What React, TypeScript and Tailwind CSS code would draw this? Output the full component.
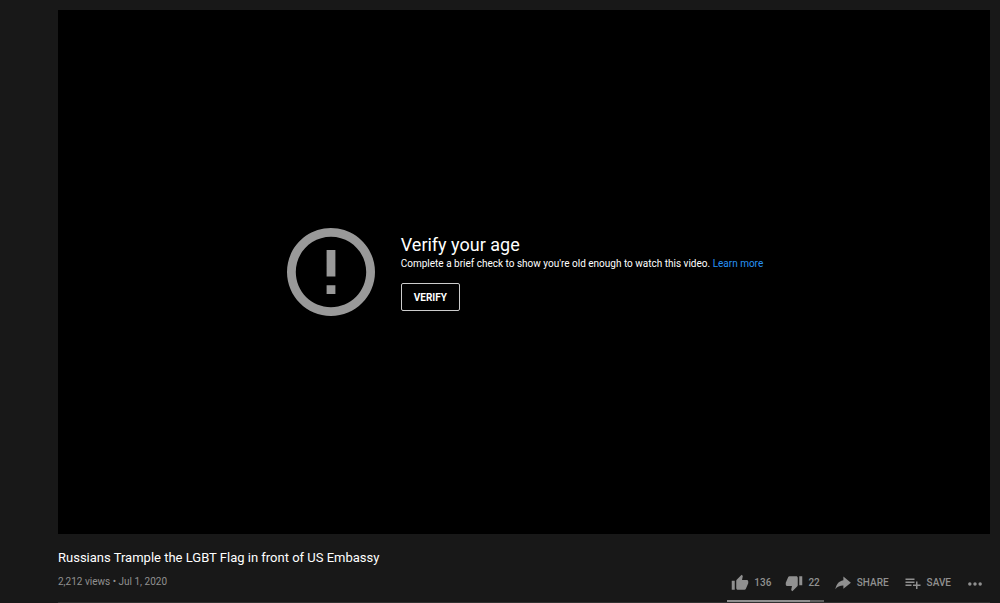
import type { ReactNode } from 'react';

const icons = {
  like: 'M1 21h4V9H1v12zm22-11c0-1.1-.9-2-2-2h-6.31l.95-4.57.03-.32c0-.41-.17-.79-.44-1.06L14.17 1 7.59 7.59C7.22 7.95 7 8.45 7 9v10c0 1.1.9 2 2 2h9c.83 0 1.54-.5 1.84-1.22l3.02-7.05c.09-.23.14-.47.14-.73v-2z',
  dislike: 'M15 3H6c-.83 0-1.54.5-1.84 1.22l-3.02 7.05c-.09.23-.14.47-.14.73v2c0 1.1.9 2 2 2h6.31l-.95 4.57-.03.32c0 .41.17.79.44 1.06L9.83 23l6.59-6.59c.36-.36.58-.86.58-1.41V5c0-1.1-.9-2-2-2zm4 0v12h4V3h-4z',
  share: 'M12.5 8.2V3.4L22.5 11.6 12.5 19.8v-4.6C7.5 15.2 4.2 16.7 1.8 20.3 2.9 14.6 5.8 9.2 12.5 8.2z',
  save: 'M14 10H2v2h12v-2zm0-4H2v2h12V6zm4 8v-4h-2v4h-4v2h4v4h2v-4h4v-2h-4zM2 16h8v-2H2v2z',
  more: 'M5.1 11.1a2.3 2.3 0 1 0 0 4.6 2.3 2.3 0 0 0 0-4.6zm6.9 0a2.3 2.3 0 1 0 0 4.6 2.3 2.3 0 0 0 0-4.6zm6.9 0a2.3 2.3 0 1 0 0 4.6 2.3 2.3 0 0 0 0-4.6z',
};

const Action = ({ icon, label, children }: { icon: keyof typeof icons; label: string; children?: ReactNode }) => (
  <button type="button" aria-label={label} className="flex items-center gap-[5px] text-[10px] leading-4 font-medium">
    <svg viewBox="0 0 24 24" className="size-[18px] fill-current" aria-hidden="true">
      <path d={icons[icon]} />
    </svg>
    {children}
  </button>
);

const AgeGate = () => (
  <section className="flex aspect-video items-center justify-center gap-[26px] bg-black pl-[2px] text-white">
    <svg viewBox="2 2 20 20" className="size-[88px] shrink-0 fill-[#999]" aria-hidden="true">
      <path d="M11 15h2v2h-2zm0-8h2v6h-2zm.99-5C6.47 2 2 6.48 2 12s4.47 10 9.99 10C17.52 22 22 17.52 22 12S17.52 2 11.99 2zM12 20c-4.42 0-8-3.58-8-8s3.58-8 8-8 8 3.58 8 8-3.58 8-8 8z" />
    </svg>
    <div>
      <h2 className="text-[18px] leading-6">Verify your age</h2>
      <p className="text-[10px] leading-[14px]">
        Complete a brief check to show you're old enough to watch this video.{' '}
        <a href="#learn-more" className="text-[#2793f5]">Learn more</a>
      </p>
      <button type="button" className="mt-3 h-7 rounded-[2px] border border-[#ccc] px-3 text-[10px] font-bold">
        VERIFY
      </button>
    </div>
  </section>
);

export default function App() {
  return (
    <main className="min-h-screen bg-[#181818] pt-[10px] pr-[10px] pl-[58px] font-[Roboto,sans-serif]">
      <AgeGate />
      <div className="border-b border-[#303030] pt-[14px]">
        <h1 className="text-[13px] leading-5 text-white">Russians Trample the LGBT Flag in front of US Embassy</h1>
        <div className="flex items-start justify-between">
          <p className="pt-[6px] text-[10px] leading-4 text-[#909090]">2,212 views • Jul 1, 2020</p>
          <div className="flex items-start gap-[10px] pr-[6px] text-[#909090]">
            <div>
              <div className="flex h-8 items-center gap-[14px] px-1 pb-[2px]">
                <Action icon="like" label="Like">136</Action>
                <Action icon="dislike" label="Dislike">22</Action>
              </div>
              <div className="flex h-[2px] bg-[#606060]">
                <div className="bg-[#909090]" style={{ width: `${(136 / 158) * 100}%` }} />
              </div>
            </div>
            <div className="flex h-8 items-center gap-[15px] pb-[2px]">
              <Action icon="share" label="Share">SHARE</Action>
              <Action icon="save" label="Save">SAVE</Action>
              <Action icon="more" label="More actions" />
            </div>
          </div>
        </div>
      </div>
    </main>
  );
}
